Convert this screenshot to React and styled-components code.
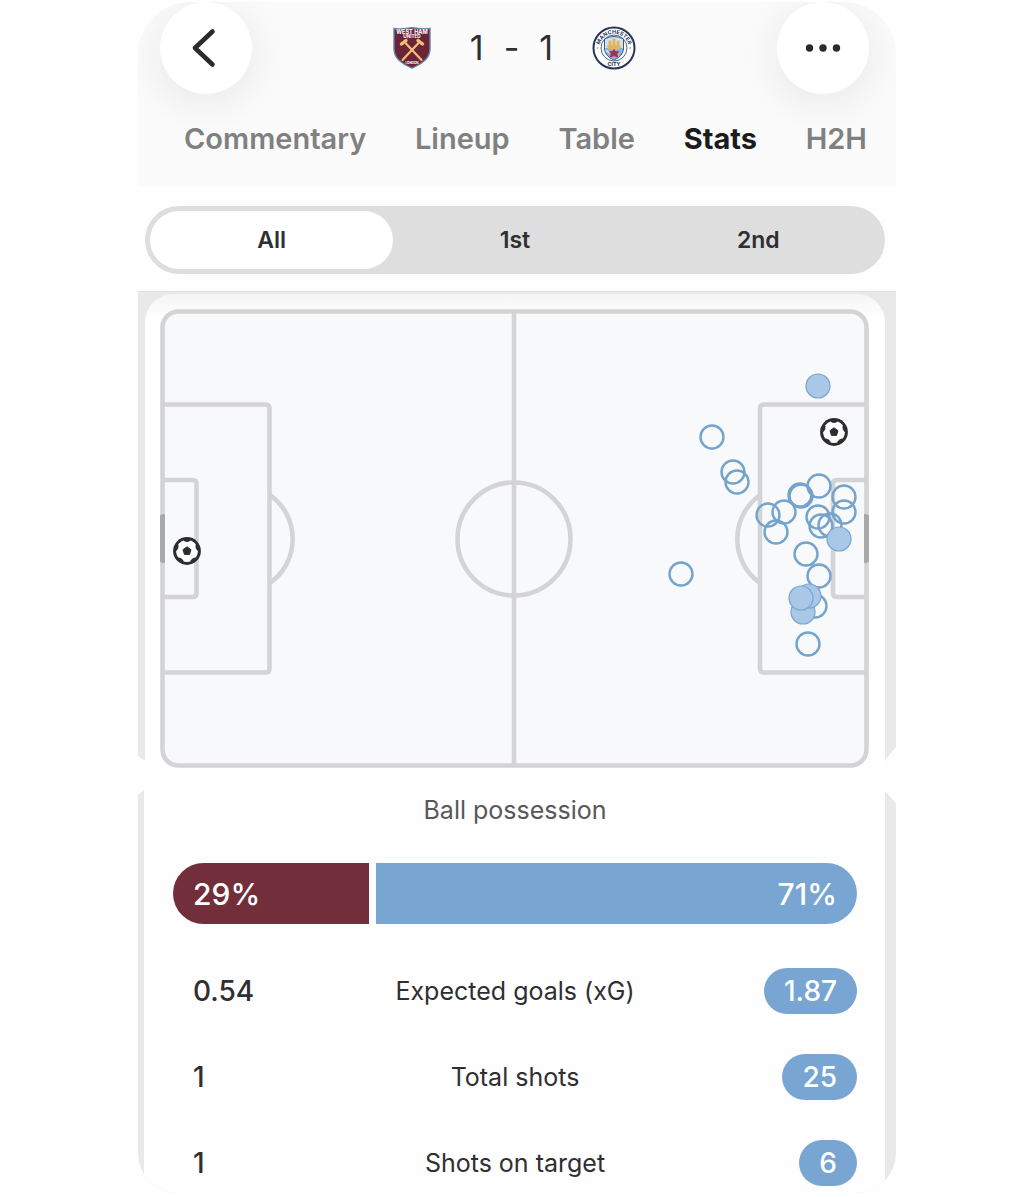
import React, { useState } from 'react';
import styled, { createGlobalStyle } from 'styled-components';

const GlobalStyle = createGlobalStyle`
  * {
    box-sizing: border-box;
  }

  body {
    margin: 0;
    background: #fefefe;
    color: #2f2f31;
    font-family: Inter, Roboto, sans-serif;
  }

  button {
    border: 0;
    padding: 0;
    background: none;
    color: inherit;
    font-family: inherit;
    cursor: pointer;
  }
`;

const Page = styled.main`
  padding: 2px 132px 4px 138px;
`;

const Header = styled.header`
  padding-bottom: 29px;
  border-radius: 52px 52px 0 0;
  background: #fbfbfb;
  overflow: hidden;
`;

const TopBar = styled.div`
  display: flex;
  align-items: center;
  justify-content: space-between;
  padding: 0 27px 0 22px;
`;

const RoundButton = styled.button`
  display: flex;
  align-items: center;
  justify-content: center;
  width: 92px;
  height: 92px;
  border-radius: 50%;
  background: #fff;
  box-shadow: 0 8px 48px rgba(0, 0, 0, 0.09);
`;

const ScoreLine = styled.div`
  display: flex;
  align-items: center;
  gap: 39px;
`;

const Score = styled.h1`
  display: flex;
  gap: 20px;
  margin: 0;
  font-size: 34px;
  line-height: 44px;
  font-weight: 400;
`;

const Tabs = styled.nav`
  display: flex;
  justify-content: space-between;
  padding: 27px 29px 0 46px;
`;

const TabLink = styled.a`
  color: ${props => (props.$active ? '#1c1c1e' : '#808080')};
  font-size: 29px;
  line-height: 36px;
  font-weight: ${props => (props.$active ? 700 : 600)};
  text-decoration: none;
`;

const Segments = styled.div`
  display: grid;
  grid-template-columns: repeat(3, 1fr);
  margin: 20px 11px 17px 7px;
  padding: 5px;
  border-radius: 34px;
  background: #dedede;
`;

const Segment = styled.button`
  height: 58px;
  border-radius: 29px;
  background: ${props => (props.$active ? '#fff' : 'transparent')};
  font-size: 23px;
  font-weight: 600;
`;

const PitchSection = styled.section`
  padding: 2px 11px 0 7px;
  border-top: 1px solid #e0e0e0;
  background: #e9e9e9;
  clip-path: polygon(
    0 0, 100% 0, 100% calc(100% - 21px), calc(100% - 12px) calc(100% - 7px),
    calc(100% - 12px) 100%, 7px 100%, 7px calc(100% - 7px), 0 calc(100% - 12px)
  );
`;

const PitchCard = styled.div`
  padding: 15px 16px 0 15px;
  border-radius: 28px 28px 0 0;
  background: linear-gradient(#f5f5f5, #fff 24px);
`;

const PitchSvg = styled.svg`
  display: block;
  width: 100%;
  height: auto;
`;

const StatsSection = styled.section`
  margin-top: 22px;
  padding: 0 11px 0 6px;
  border-radius: 0 0 40px 40px;
  background: #e9e9e9;
  overflow: hidden;
  clip-path: polygon(0 5px, 6px 0, calc(100% - 12px) 0, 100% 13px, 100% 100%, 0 100%);
`;

const StatsCard = styled.div`
  padding: 2px 28px 7px 29px;
  background: #fefefe;
`;

const StatsTitle = styled.h2`
  margin: 0 0 35px;
  color: #58585a;
  font-size: 25px;
  line-height: 36px;
  font-weight: 400;
  text-align: center;
`;

const Possession = styled.div`
  display: grid;
  gap: 7px;
  height: 61px;
  margin-bottom: 44px;
  border-radius: 31px;
  overflow: hidden;
`;

const PossessionShare = styled.div`
  display: flex;
  align-items: center;
  justify-content: ${props => (props.$away ? 'flex-end' : 'flex-start')};
  padding: 0 20px;
  background: ${props => (props.$away ? '#78a5d2' : '#722f3b')};
  color: #fff;
  font-size: 30px;
  font-weight: 500;
`;

const StatsTable = styled.table`
  width: 100%;
  table-layout: fixed;
  border-collapse: collapse;
  line-height: 46px;

  td,
  th {
    padding: 0;
  }

  tr + tr > * {
    padding-top: 40px;
  }
`;

const HomeValue = styled.td`
  width: 20%;
  font-size: 28px;
  font-weight: 500;

  span {
    padding-left: 20px;
  }
`;

const StatName = styled.th`
  font-size: 25px;
  font-weight: 400;
  text-align: center;
`;

const AwayValue = styled.td`
  width: 20%;
  text-align: right;
`;

const Pill = styled.span`
  display: inline-block;
  padding: 0 20px;
  border-radius: 23px;
  background: #78a5d2;
  color: #fff;
  font-size: 28px;
  font-weight: 500;
  vertical-align: top;
`;

const tabs = ['Commentary', 'Lineup', 'Table', 'Stats', 'H2H'];
const periods = ['All', '1st', '2nd'];

const possession = { home: 29, away: 71 };

const stats = [
  { name: 'Expected goals (xG)', home: '0.54', away: '1.87' },
  { name: 'Total shots', home: '1', away: '25' },
  { name: 'Shots on target', home: '1', away: '6' },
];

// [x, y, on target], later shots are drawn on top
const shots = [
  [552, 128], [573, 163], [577, 173], [521, 265],
  [608, 206], [624, 203], [616, 223],
  [640, 186], [641, 187], [659, 177],
  [658, 208], [661, 217], [670, 216],
  [684, 188], [684, 203], [646, 245], [659, 267],
  [655, 297], [648, 335],
  [658, 77, true], [679, 230, true],
  [643, 303, true], [649, 287, true], [641, 289, true],
];

const goals = [[27, 242], [674, 123]];

const HomeBadge = () => (
  <svg width="38" height="42" viewBox="0 0 38 42" role="img" aria-label="West Ham United">
    <path
      d="M1 1.5C7 2.8 13 1 19 .8 25 1 31 2.8 37 1.5V22C37 32 28 37 19 41.2 10 37 1 32 1 22Z"
      fill="#6d2338"
      stroke="#5f87a8"
      strokeWidth="1.4"
    />
    <text x="19" y="7" textAnchor="middle" fontSize="5.6" fontWeight="700" fill="#fff">WEST HAM</text>
    <text x="19" y="11" textAnchor="middle" fontSize="4.6" fontWeight="700" fill="#fff">UNITED</text>
    <g stroke="#f2bf78" strokeLinecap="round">
      <path d="M12 15.500 28.500 33M26 15.500 9.500 33" strokeWidth="2.200" />
      <path d="M8.500 17 13 13.500M29.500 17 25 13.500" strokeWidth="3.400" />
    </g>
    <text x="19" y="37.200" textAnchor="middle" fontSize="3" fontWeight="700" fill="#fff">LONDON</text>
  </svg>
);

const AwayBadge = () => (
  <svg width="44" height="44" viewBox="0 0 44 44" role="img" aria-label="Manchester City">
    <defs>
      <path id="city-top" d="M7.600 26A14.800 14.800 0 1 1 36.400 26" />
      <clipPath id="city-shield">
        <path d="M12.500 13Q22 8 31.500 13V23Q31 30 22 34 13 30 12.500 23Z" />
      </clipPath>
    </defs>
    <circle cx="22" cy="22" r="20.500" fill="#fff" stroke="#24375a" strokeWidth="2" />
    <circle cx="22" cy="22" r="13" fill="#fff" stroke="#4b668c" strokeWidth="1" />
    <g clipPath="url(#city-shield)">
      <rect x="11" y="9" width="22" height="26" fill="#cfe3f3" />
      <rect x="11" y="22" width="22" height="13" fill="#84b4dc" />
      <path d="M13 24 31 34M13 29 24 35" stroke="#d9ecf8" strokeWidth="1.500" />
      <path d="M15 20h14l-2 3H17zM17 15h2v5h-2zM21 13h2v7h-2zM25 15h2v5h-2z" fill="#e3b55a" stroke="#e3b55a" />
      <path d="m22 23.500 1.500 2.400 3-.3-1.800 2.400 1 3-3.700-1.400-3.700 1.400 1-3-1.800-2.400 3 .3z" fill="#a82c4b" stroke="#a82c4b" />
    </g>
    <path d="M12.500 13Q22 8 31.500 13V23Q31 30 22 34 13 30 12.500 23Z" fill="none" stroke="#3b5680" />
    <circle cx="5.800" cy="22" r=".9" fill="#d1a94d" />
    <circle cx="38.200" cy="22" r=".9" fill="#d1a94d" />
    <text fontSize="5.400" fontWeight="700" fill="#24375a">
      <textPath href="#city-top" startOffset="50%" textAnchor="middle">MANCHESTER</textPath>
    </text>
    <text x="22" y="40" fontSize="5.400" fontWeight="700" fill="#24375a" textAnchor="middle">CITY</text>
  </svg>
);

const Ball = ({ x, y }) => (
  <g transform={`translate(${x} ${y})`}>
    <circle r="13.900" fill="#2d2d2f" />
    <circle r="10.900" fill="#fff" />
    <path
      d="M0-4.200 4-1.300 2.500 3.400H-2.500L-4-1.300Z"
      fill="#2d2d2f"
      stroke="#2d2d2f"
      strokeWidth="1"
      strokeLinejoin="round"
    />
    {[0, 72, 144, 216, 288].map(angle => (
      <path
        key={angle}
        d="M-4-11.500-2.600-9.800Q0-8.400 2.600-9.800L4-11.500Z"
        fill="#2d2d2f"
        transform={`rotate(${angle})`}
      />
    ))}
  </g>
);

const Pitch = () => (
  <PitchSvg viewBox="0 0 709 459" role="img" aria-label="Shot map">
    <rect x="2.500" y="2.500" width="704" height="454" rx="16" fill="#f8f9fb" />
    <g fill="none" stroke="#d4d4d6" strokeWidth="4.600">
      <path d="M354 3V456" />
      <circle cx="354" cy="230" r="56.500" />
      <path d="M110 186A54 54 0 0 1 110 274M600 186A54 54 0 0 0 600 274" />
      <path d="M3 95.500H105.500Q109.500 95.500 109.500 99.500V359.500Q109.500 363.500 105.500 363.500H3" />
      <path d="M3 171H32.500Q36.500 171 36.500 175V284Q36.500 288 32.500 288H3" />
      <path d="M706 95.500H604Q600 95.500 600 99.500V359.500Q600 363.500 604 363.500H706" />
      <path d="M706 171H677Q673 171 673 175V284Q673 288 677 288H706" />
      <rect x="2.500" y="2.500" width="704" height="454" rx="16" />
    </g>
    <path d="M0 207Q0 205 5 205V254Q0 254 0 252ZM709 207Q709 205 704 205V254Q709 254 709 252Z" fill="#a9a9ab" />
    {shots.map(([x, y, onTarget]) => (
      <circle
        key={`${x}-${y}`}
        cx={x}
        cy={y}
        r={onTarget ? 12 : 11.5}
        fill={onTarget ? '#a9c7e6' : 'none'}
        stroke={onTarget ? '#7ba4ce' : '#74a3cb'}
        strokeWidth={onTarget ? 1.2 : 2.4}
      />
    ))}
    {goals.map(([x, y]) => (
      <Ball key={x} x={x} y={y} />
    ))}
  </PitchSvg>
);

const App = () => {
  const [period, setPeriod] = useState('All');

  return (
    <>
      <GlobalStyle />
      <Page>
        <Header>
          <TopBar>
            <RoundButton aria-label="Back">
              <svg width="32" height="44" viewBox="0 0 32 44" fill="none" stroke="#2b2b2d" strokeWidth="4.600" strokeLinecap="round" strokeLinejoin="round">
                <path d="M22.500 5.500 5 22 22.500 38.500" />
              </svg>
            </RoundButton>
            <ScoreLine>
              <HomeBadge />
              <Score>
                <span>1</span>
                <span>-</span>
                <span>1</span>
              </Score>
              <AwayBadge />
            </ScoreLine>
            <RoundButton aria-label="More">
              <svg width="36" height="8" viewBox="0 0 36 8" fill="#2b2b2d">
                <circle cx="4.500" cy="4" r="3.700" />
                <circle cx="18" cy="4" r="3.700" />
                <circle cx="31.500" cy="4" r="3.700" />
              </svg>
            </RoundButton>
          </TopBar>
          <Tabs>
            {tabs.map(tab => (
              <TabLink key={tab} href={`#${tab.toLowerCase()}`} $active={tab === 'Stats'}>
                {tab}
              </TabLink>
            ))}
          </Tabs>
        </Header>

        <Segments>
          {periods.map(name => (
            <Segment
              key={name}
              $active={name === period}
              aria-pressed={name === period}
              onClick={() => setPeriod(name)}
            >
              {name}
            </Segment>
          ))}
        </Segments>

        <PitchSection>
          <PitchCard>
            <Pitch />
          </PitchCard>
        </PitchSection>

        <StatsSection>
          <StatsCard>
            <StatsTitle>Ball possession</StatsTitle>
            <Possession style={{ gridTemplateColumns: `${possession.home}fr ${possession.away}fr` }}>
              <PossessionShare>{possession.home}%</PossessionShare>
              <PossessionShare $away>{possession.away}%</PossessionShare>
            </Possession>
            <StatsTable>
              <tbody>
                {stats.map(stat => (
                  <tr key={stat.name}>
                    <HomeValue><span>{stat.home}</span></HomeValue>
                    <StatName scope="row">{stat.name}</StatName>
                    <AwayValue><Pill>{stat.away}</Pill></AwayValue>
                  </tr>
                ))}
              </tbody>
            </StatsTable>
          </StatsCard>
        </StatsSection>
      </Page>
    </>
  );
};

export default App;
